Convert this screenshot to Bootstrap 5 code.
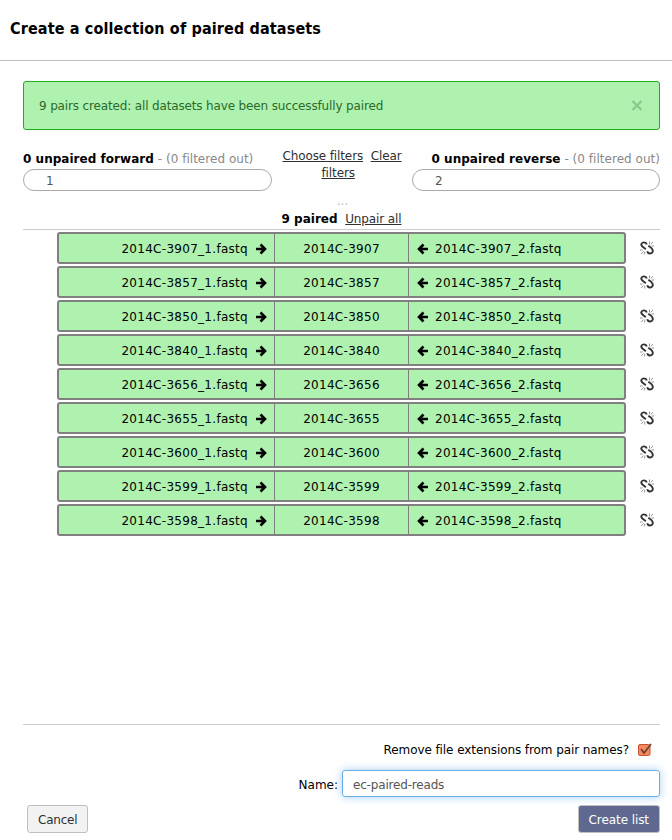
<!DOCTYPE html>
<html lang="en">
<head>
<meta charset="utf-8">
<title>Create a collection of paired datasets</title>
<link href="https://cdn.jsdelivr.net/npm/bootstrap@5.3.0/dist/css/bootstrap.min.css" rel="stylesheet">
<style>
body{font-family:"DejaVu Sans",Verdana,sans-serif;font-size:12px;line-height:17px;color:#000;background:#fff;height:840px;overflow:hidden}
a{color:#303030}
.modal-title{font-family:"DejaVu Sans Condensed","DejaVu Sans",sans-serif;font-stretch:condensed;font-size:16px;line-height:20px;font-weight:700;letter-spacing:.14px}
.top-bar{height:61px;padding:19px 10px 0;border-bottom:1px solid #bfbfbf}
.creator{padding:20px 12px 0 23px;height:779px}
.notice{height:49px;padding:1px 16px 0 15px;background:#aff1af;border:1px solid #20ad20;border-radius:3px;color:#2b6a2b;letter-spacing:-.15px}
.dismiss{color:#8bc78b}
.filters{height:65px;padding-top:17px}
.side{width:249px;padding-top:4px;white-space:nowrap;letter-spacing:.03px}
.side.rev{width:248px}
.middle{width:140px;padding:1px 7px 0 7px}
.middle a,.paired-head a{letter-spacing:-.12px}
.muted{color:#888}
.pill{height:22px;border:1px solid #aaa;border-radius:11px;padding:0 22px;line-height:22px;color:#555;margin-top:1px;background:#fff}
.dots{color:#bbb;height:14px;line-height:12px;padding-left:2px}
.paired-head{height:21px;line-height:21px;border-bottom:1px solid #ccc}
.pairs{height:495px;padding:2px 0 0 34px;border-bottom:1px solid #ccc}
.pair-row{margin-bottom:2px;height:32px}
.pair-box{width:569px;border:2px solid #808080;border-radius:3px;background:#aff1af;letter-spacing:.29px}
.pair-box span{padding-top:2px}
.cell-f{width:216px;border-right:1px solid #808080;padding-right:7px}
.cell-n{width:134px;border-right:1px solid #808080}
.cell-r{padding-left:8px}
.cell-f svg{margin-left:7px}
.cell-r svg{margin-right:6px}
.pair-box svg{margin-top:1px}
.unlink{margin-left:14px;margin-top:-1px}
.remove-line{height:45px;padding:4px 8px 0 0;letter-spacing:-.08px}
.remove-line span{padding-top:1px}
.name-input{width:318px;height:27px;border:1px solid #66afe9;border-radius:3px;padding:3px 10px 0;color:#555;letter-spacing:-.18px;box-shadow:0 0 8px rgba(102,175,233,.6)}
.actions{padding:8px 0 0 4px}
.act{height:28px;padding:1px 10px 0;font-size:12px;line-height:27px;border-radius:3px;letter-spacing:-.08px}
.act-cancel{letter-spacing:-.22px}
.act-cancel,.act-cancel:hover{background:#f2f2f2;color:#303030;border-color:#bfbfbf}
.act-create,.act-create:hover{background:#5f6990;color:#fff;border-color:#bfbfbf}
</style>
<script src="https://cdn.jsdelivr.net/npm/bootstrap@5.3.0/dist/js/bootstrap.bundle.min.js"></script>
</head>
<body>
<svg class="d-none">
  <symbol id="right" viewBox="0 0 12 12"><path d="M1 6h8M5.500 1.500 10 6l-4.500 4.500" fill="none" stroke="#000" stroke-width="2.600"/></symbol>
  <symbol id="left" viewBox="0 0 12 12"><path d="M11 6H3M6.500 1.500 2 6l4.500 4.500" fill="none" stroke="#000" stroke-width="2.600"/></symbol>
  <symbol id="broken" viewBox="0 0 14 14"><g fill="none" stroke="#333" stroke-width="1.900"><path d="M6.800 3.600C6 .800 2 .600 1.300 3.200.900 5 2.800 6 5.800 8.200"/><path d="M8.300 4.800C11 6.500 13.500 8.300 12.700 10.700 11.800 13.300 7.800 13 7.200 10.300"/></g><path d="M9.500.500v2.800M13 1 10.800 3.500M14 5h-2.500M4.700 13.500V10.700M1.200 13 3.500 10.500M0 9h2.600" stroke="#888" stroke-width=".900" fill="none"/></symbol>
</svg>
<header class="top-bar"><h4 class="modal-title">Create a collection of paired datasets</h4></header>
<main class="creator d-flex flex-column">
  <div class="notice d-flex align-items-center justify-content-between">
    <span>9 pairs created: all datasets have been successfully paired</span>
    <svg class="dismiss" width="12" height="12" viewBox="0 0 12 12"><path d="m1.500 1 9 9m0-9-9 9" stroke="currentColor" stroke-width="2.200"/></svg>
  </div>
  <div class="filters d-flex">
    <div class="side"><b>0 unpaired forward</b> <span class="muted">- (0 filtered out)</span><div class="pill">1</div></div>
    <div class="middle text-center"><a href="#">Choose filters</a>&nbsp; <a href="#">Clear<br>filters</a>&nbsp;&nbsp;</div>
    <div class="side rev text-end"><b>0 unpaired reverse</b> <span class="muted">- (0 filtered out)</span><div class="pill text-start">2</div></div>
  </div>
  <div class="dots text-center">...</div>
  <div class="paired-head text-center"><b>9 paired</b>&nbsp; <a href="#">Unpair all</a></div>
  <div class="pairs" id="pairs"></div>
  <div class="remove-line d-flex justify-content-end align-items-center"><span>Remove file extensions from pair names?</span>
    <svg class="ms-2" width="15" height="14" viewBox="0 0 15 14"><rect x="1.500" y="1.500" width="11.500" height="11" rx="1.500" fill="#f58a61" stroke="#c3522f"/><path d="m4 6 3 4L14 1" fill="none" stroke="#6b4435" stroke-width="1.800"/></svg></div>
  <div class="d-flex justify-content-end align-items-center"><label class="me-1 pt-1">Name:</label><div class="name-input d-flex align-items-center"><span>ec-paired-reads</span></div></div>
  <div class="actions d-flex justify-content-between"><button class="btn act act-cancel">Cancel</button><button class="btn act act-create">Create list</button></div>
</main>
<script>
document.getElementById('pairs').innerHTML = ['3907','3857','3850','3840','3656','3655','3600','3599','3598'].map(n => `
<div class="pair-row d-flex align-items-center">
  <div class="pair-box d-flex h-100">
    <div class="cell-f d-flex align-items-center justify-content-end"><span>2014C-${n}_1.fastq</span><svg width="12" height="12"><use href="#right"/></svg></div>
    <div class="cell-n d-flex align-items-center justify-content-center"><span>2014C-${n}</span></div>
    <div class="cell-r d-flex align-items-center"><svg width="12" height="12"><use href="#left"/></svg><span>2014C-${n}_2.fastq</span></div>
  </div>
  <svg class="unlink" width="14" height="14"><use href="#broken"/></svg>
</div>`).join('');
</script>
</body>
</html>
